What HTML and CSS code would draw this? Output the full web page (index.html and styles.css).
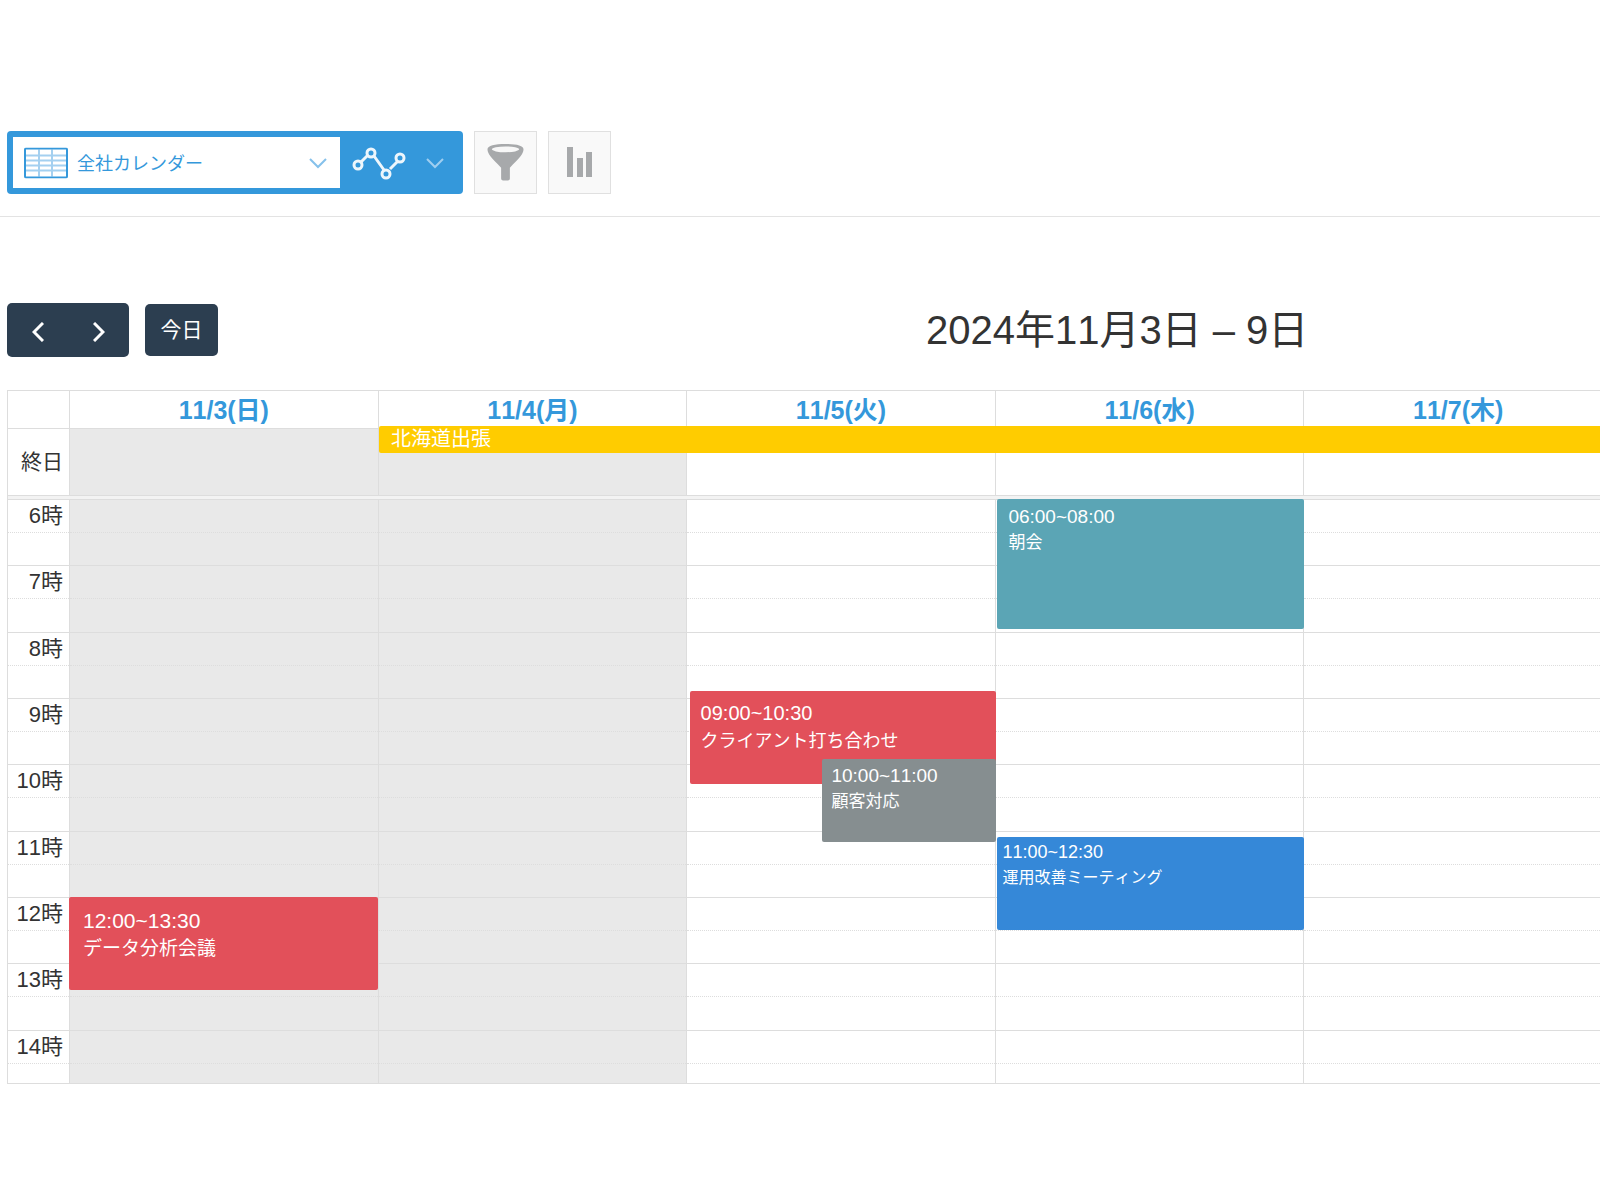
FILE: index.html
```
<!DOCTYPE html>
<html lang="ja">
<head>
  <meta charset="UTF-8" />
  <title>全社カレンダー</title>
  <meta name="viewport" content="width=device-width, initial-scale=1">
  <link rel="stylesheet" href="styles.css">
</head>
<body>
  <header class="toolbar">
    <div class="view-group">
      <div class="view-select">
        <svg class="view-icon" width="44" height="31" viewBox="0 0 44 31" fill="none">
          <path d="M2 8h40M2 13h40M2 18h40M2 23h40M15 2v27M28 2v27" stroke="#a4d0f0" stroke-width="2"/>
          <rect x="1" y="1" width="42" height="29" rx="1" stroke="#3498db" stroke-width="2"/>
        </svg>
        <select aria-label="ビュー">
          <option>全社カレンダー</option>
        </select>
        <svg class="chevron" width="18" height="12" viewBox="0 0 18 12" fill="none" stroke="#85c1eb" stroke-width="2">
          <path d="M1 2l8 8 8-8"/>
        </svg>
      </div>
      <button class="graph-btn" aria-label="グラフ">
        <svg width="54" height="34" viewBox="0 0 54 34" fill="none" stroke="#edf6fc" stroke-width="3">
          <path d="M9 16l7-7M22 10l10 14M38 23l8-8"/>
          <circle cx="6" cy="19" r="4"/>
          <circle cx="19" cy="7" r="4"/>
          <circle cx="34" cy="28" r="4"/>
          <circle cx="48" cy="12" r="4"/>
        </svg>
        <svg width="18" height="12" viewBox="0 0 18 12" fill="none" stroke="#9fcef0" stroke-width="2">
          <path d="M1 2l8 8 8-8"/>
        </svg>
      </button>
    </div>
    <button class="tool-btn" aria-label="絞り込み">
      <svg width="37" height="38" viewBox="0 0 38 38">
        <path d="M0.500 6C0.500 2 8 0.500 19 0.500S37.500 2 37.500 6C37.500 11 33 15 23.500 25V36q0 2-2 2h-5q-2 0-2-2V25C5 15 0.500 11 0.500 6z" fill="#a7a9ab"/>
        <ellipse cx="19" cy="6" rx="14" ry="3" fill="#f7f7f7"/>
      </svg>
    </button>
    <button class="tool-btn" aria-label="集計">
      <svg width="26" height="30" viewBox="0 0 26 30" fill="#a7a9ab">
        <rect width="6" height="30"/>
        <rect x="10" y="11" width="6" height="19"/>
        <rect x="19" y="5" width="6" height="25"/>
      </svg>
    </button>
  </header>

  <main class="calendar">
    <div class="cal-header">
      <div class="cal-nav">
        <div class="nav-group">
          <button class="nav-btn" aria-label="前の週">
            <svg width="12" height="20" viewBox="0 0 12 20" fill="none" stroke="#fff" stroke-width="3"><path d="M11 1L2 10l9 9"/></svg>
          </button>
          <button class="nav-btn" aria-label="次の週">
            <svg width="12" height="20" viewBox="0 0 12 20" fill="none" stroke="#fff" stroke-width="3"><path d="M1 1l9 9-9 9"/></svg>
          </button>
        </div>
        <button class="today-btn">今日</button>
      </div>
      <h1>2024年11月3日 – 9日</h1>
    </div>

    <div class="week">
      <table class="days">
        <thead>
          <tr>
            <th class="axis"></th>
            <th><a href="#">11/3(日)</a></th>
            <th><a href="#">11/4(月)</a></th>
            <th><a href="#">11/5(火)</a></th>
            <th><a href="#">11/6(水)</a></th>
            <th><a href="#">11/7(木)</a></th>
          </tr>
        </thead>
        <tbody>
          <tr class="all-day">
            <td class="axis">終日</td>
            <td class="off"></td>
            <td class="off"></td>
            <td></td>
            <td></td>
            <td></td>
          </tr>
        </tbody>
      </table>
      <div class="event trip">北海道出張</div>

      <div class="divider"></div>

      <div class="time-grid">
        <table class="slots">
          <tbody id="slotBody"></tbody>
        </table>
        <div class="event-layer">
          <div class="day">
            <div class="event red analysis"><time>12:00~13:30</time><p>データ分析会議</p></div>
          </div>
          <div class="day"></div>
          <div class="day">
            <div class="event red client"><time>09:00~10:30</time><p>クライアント打ち合わせ</p></div>
            <div class="event gray"><time>10:00~11:00</time><p>顧客対応</p></div>
          </div>
          <div class="day">
            <div class="event teal"><time>06:00~08:00</time><p>朝会</p></div>
            <div class="event blue"><time>11:00~12:30</time><p>運用改善ミーティング</p></div>
          </div>
          <div class="day"></div>
        </div>
      </div>
    </div>
  </main>

  <script>
    const body = document.getElementById("slotBody");
    const cells = '<td class="off"></td><td class="off"></td><td></td><td></td><td></td>';

    // 1時間につき2行 (00分 / 30分)
    for (let h = 6; h <= 14; h++) {
      body.innerHTML += `
        <tr class="hour"><td class="axis">${h}時</td>${cells}</tr>
        <tr class="half"><td class="axis"></td>${cells}</tr>
      `;
    }
  </script>
</body>
</html>
```

FILE: styles.css
```
* {
  box-sizing: border-box;
}
body {
  font-family: "Liberation Sans", "Noto Sans CJK JP", sans-serif;
  font-kerning: none;
  background: #fff;
  color: #333;
  margin: 0;
  padding-top: 131px;
  overflow-x: hidden;
}
button, select {
  font-family: inherit;
  cursor: pointer;
}
svg {
  display: block;
}

/* toolbar */
.toolbar {
  display: flex;
  gap: 11px;
  height: 86px;
  padding-left: 7px;
  align-items: flex-start;
  border-bottom: 1px solid #e3e3e3;
}
.view-group {
  display: flex;
  height: 63px;
  padding: 6px 0 6px 6px;
  background: #3498db;
  border-radius: 4px;
}
.view-select {
  position: relative;
  width: 327px;
}
.view-select select {
  appearance: none;
  width: 100%;
  height: 100%;
  padding: 2px 40px 0 64px;
  border: none;
  border-radius: 0;
  background: #fff;
  color: #3498db;
  font-size: 18px;
}
.view-icon, .chevron {
  position: absolute;
  top: 50%;
  transform: translateY(-50%);
  pointer-events: none;
}
.view-icon {
  left: 11px;
}
.chevron {
  right: 13px;
}
.graph-btn {
  display: flex;
  align-items: center;
  gap: 20px;
  width: 123px;
  padding: 0 0 0 12px;
  border: none;
  background: none;
}
.tool-btn {
  display: flex;
  align-items: center;
  justify-content: center;
  width: 63px;
  height: 63px;
  padding: 0 0 2px;
  background: #f9f9f9;
  border: 1px solid #e0e0e0;
}

/* calendar header */
.calendar {
  margin: 86px 0 0 7px;
  overflow: hidden;
}
.cal-header {
  display: grid;
  grid-template-columns: 1fr auto 1fr;
  align-items: center;
  width: calc(139% + 6px);
  height: 54px;
  margin-bottom: 33px;
}
.cal-nav {
  display: flex;
  align-items: center;
  gap: 16px;
}
.nav-group {
  display: flex;
  background: #2c3e50;
  border-radius: 5px;
}
.nav-btn {
  display: flex;
  align-items: center;
  justify-content: center;
  width: 61px;
  height: 54px;
  padding: 3px 0 0;
  border: none;
  background: none;
}
.today-btn {
  width: 73px;
  height: 52px;
  padding: 0 0 4px;
  border: none;
  border-radius: 5px;
  background: #2c3e50;
  color: #fff;
  font-size: 21px;
}
h1 {
  margin: 0;
  font-size: 40px;
  font-weight: normal;
  line-height: 54px;
}

/* week */
.week {
  position: relative;
  width: calc(100% + 13px);
}
table {
  width: 100%;
  table-layout: fixed;
  border-collapse: collapse;
}
th, td {
  padding: 0;
  border: 1px solid #ddd;
}
.axis {
  width: 62px;
  padding-right: 6px;
  text-align: right;
  font-size: 21px;
  line-height: 24px;
}
.slots .axis {
  font-size: 22px;
}
.off {
  background: #e9e9e9;
}
.days th {
  height: 38px;
  font-size: 25px;
  line-height: 28px;
}
.days a {
  color: #3498db;
  text-decoration: none;
}
.all-day td {
  height: 67px;
}
.divider {
  height: 3px;
  background: #f3f3f3;
  border-left: 1px solid #ddd;
}
.time-grid {
  position: relative;
  height: 585px;
  overflow: hidden;
  border-bottom: 1px solid #ddd;
}
.slots {
  height: 598px;
}
.slots td {
  height: 33px;
}
.hour td {
  border-bottom: 1px dotted #ddd;
}
.half td {
  border-top: 1px dotted #ddd;
}

/* events */
.event-layer {
  position: absolute;
  inset: 0;
  display: grid;
  grid-template-columns: repeat(5, 1fr);
  padding-left: 62px;
}
.day {
  position: relative;
}
.event {
  position: absolute;
  left: 2px;
  right: 0;
  border-radius: 2px;
  color: #fff;
}
.event time, .event p {
  display: block;
  margin: 0;
  white-space: nowrap;
}
.trip {
  top: 36px;
  left: 372px;
  height: 27px;
  padding-left: 12px;
  background: #ffcc00;
  font-size: 20px;
  line-height: 26px;
}
.red {
  background: #e2505a;
  height: 93px;
  line-height: 28px;
}
.analysis {
  top: 398px;
  left: 0;
  padding: 10px 14px;
  font-size: 19px;
}
.analysis time {
  font-size: 21px;
}
.client {
  top: 192px;
  left: 3px;
  right: -1px;
  padding: 8px 11px;
  font-size: 18px;
}
.client time {
  font-size: 20px;
}
.gray {
  top: 260px;
  left: 44%;
  right: -1px;
  height: 83px;
  padding: 4px 9px;
  background: #868e90;
  font-size: 17px;
  line-height: 26px;
}
.teal {
  top: 0;
  height: 130px;
  padding: 5px 11px;
  background: #5ba5b5;
  font-size: 17px;
  line-height: 26px;
}
.gray time, .teal time {
  font-size: 19px;
}
.blue {
  top: 338px;
  height: 93px;
  padding: 3px 5px;
  background: #3588d8;
  font-size: 16px;
  line-height: 25px;
}
.blue time {
  font-size: 18px;
}
```
